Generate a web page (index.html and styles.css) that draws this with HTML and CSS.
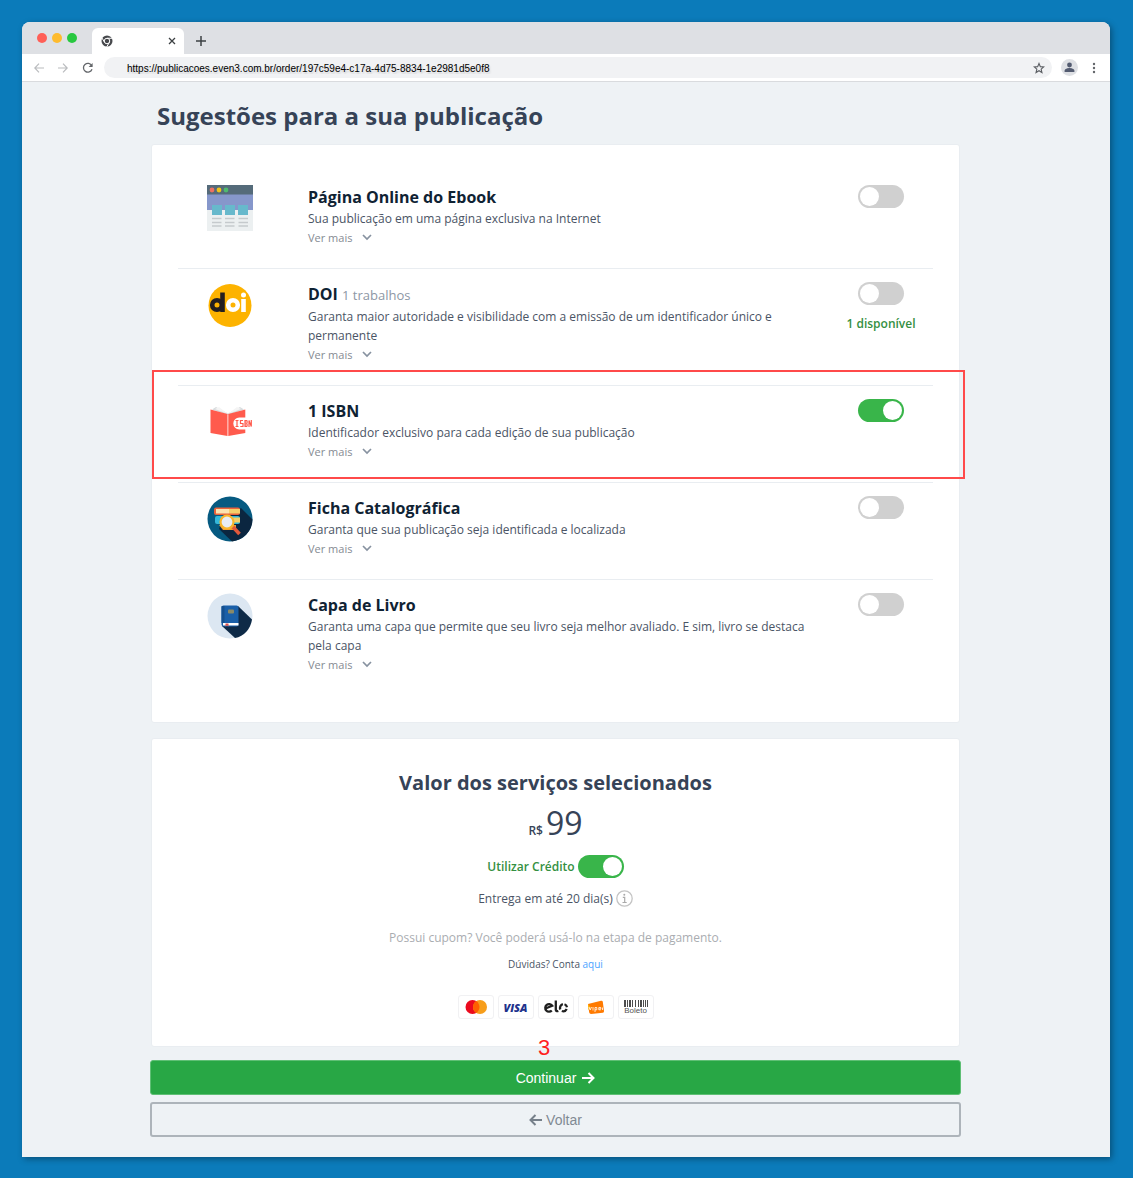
FILE: index.html
```
<!DOCTYPE html>
<html lang="pt-BR">
<head>
  <meta charset="UTF-8">
  <meta name="viewport" content="width=device-width, initial-scale=1.0">
  <title>Sugestões para a sua publicação</title>
  <link rel="stylesheet" href="styles.css">
</head>
<body>
  <div class="window">
    <header class="tabs">
      <span class="dot red"></span>
      <span class="dot yellow"></span>
      <span class="dot green"></span>
      <div class="tab">
        <svg width="12" height="12" viewBox="0 0 24 24"><circle cx="12" cy="12" r="11" fill="#47494d"/><circle cx="12" cy="12" r="5.500" fill="#47494d" stroke="#fff" stroke-width="2"/><path d="M12 6.500H23M7.200 14.800L2 6M16.800 14.800L11.500 23.500" stroke="#fff" stroke-width="2"/></svg>
        <button class="icon-btn" aria-label="Fechar aba"><svg width="8" height="8" viewBox="0 0 8 8"><path d="M1 1l6 6M7 1L1 7" stroke="#3c4043" stroke-width="1.300"/></svg></button>
      </div>
      <button class="icon-btn new-tab" aria-label="Nova aba"><svg width="10" height="10" viewBox="0 0 10 10"><path d="M5 0v10M0 5h10" stroke="#3c4043" stroke-width="1.500"/></svg></button>
    </header>

    <div class="toolbar">
      <button class="icon-btn" aria-label="Voltar página"><svg width="10" height="10" viewBox="0 0 10 10"><path d="M10 5H1M5 .7L.8 5 5 9.300" fill="none" stroke="#b9bbbe" stroke-width="1.200"/></svg></button>
      <button class="icon-btn" aria-label="Avançar página"><svg width="10" height="10" viewBox="0 0 10 10"><path d="M0 5h9M5 .7L9.200 5 5 9.300" fill="none" stroke="#b9bbbe" stroke-width="1.200"/></svg></button>
      <button class="icon-btn" aria-label="Recarregar"><svg width="12" height="12" viewBox="0 0 12 12"><path d="M9.800 3.800A4.400 4.400 0 1 0 10 7.300" fill="none" stroke="#63666a" stroke-width="1.300"/><path d="M10.600 1v4H6.600z" fill="#63666a"/></svg></button>
      <div class="address">
        <input type="text" aria-label="Endereço" value="https://publicacoes.even3.com.br/order/197c59e4-c17a-4d75-8834-1e2981d5e0f8">
        <svg width="12" height="12" viewBox="0 0 24 24"><path d="M12 3l2.700 6.300 6.800.6-5.200 4.500 1.600 6.700L12 17.500l-5.900 3.600 1.600-6.700-5.200-4.500 6.800-.6z" fill="none" stroke="#5b5e63" stroke-width="2.200"/></svg>
      </div>
      <svg class="avatar" width="17" height="17" viewBox="0 0 17 17"><circle cx="8.500" cy="8.500" r="8.500" fill="#dee0e4"/><circle cx="8.500" cy="6" r="2.400" fill="#535b70"/><path d="M3.600 13v-1.300c0-1.900 3.200-2.700 4.900-2.700s4.900.8 4.900 2.700V13z" fill="#535b70"/></svg>
      <button class="icon-btn" aria-label="Menu"><svg width="4" height="12" viewBox="0 0 4 12"><g fill="#63666a"><circle cx="2" cy="2" r="1.200"/><circle cx="2" cy="6" r="1.200"/><circle cx="2" cy="10" r="1.200"/></g></svg></button>
    </div>

    <main class="content">
      <h1>Sugestões para a sua publicação</h1>

      <section class="card services">
        <div class="service">
          <svg class="service-icon" width="46" height="46" viewBox="0 0 46 46"><path fill="#ecf0f1" d="M0 0h46v46H0z"/><path fill="#8697cb" d="M0 9h46v16H0z"/><path fill="#556b7a" d="M0 0h46v9.500H0z"/><circle cx="5" cy="5" r="2.400" fill="#ed7161"/><circle cx="12" cy="5" r="2.400" fill="#efc41a"/><circle cx="19" cy="5" r="2.400" fill="#4fba6f"/><path fill="#67b9cc" d="M5 20h10v10H5zM18 20h10v10H18zM31 20h10v10H31z"/><path stroke="#c5cacd" stroke-width="1.300" d="M5 33.500h9.500M5 37.500h9.500M5 41h9.500M18 33.500h9.500M18 37.500h9.500M18 41h9.500M31.500 33.500H41M31.500 37.500H41M31.500 41H41"/></svg>
          <div class="service-text">
            <h2><label for="pagina">Página Online do Ebook</label></h2>
            <p>Sua publicação em uma página exclusiva na Internet</p>
            <button class="more">Ver mais <svg width="10" height="7" viewBox="0 0 10 7"><path d="M1 1l4 4 4-4" fill="none" stroke="#8792a0" stroke-width="1.700"/></svg></button>
          </div>
          <div class="service-toggle"><input type="checkbox" class="toggle" id="pagina"></div>
        </div>

        <div class="service">
          <svg class="service-icon" width="46" height="46" viewBox="0 0 46 46"><circle cx="23" cy="23.500" r="21.500" fill="#fdb300"/><g fill="none" stroke-width="4.600"><circle cx="10" cy="23" r="4.800" stroke="#231f20"/><path d="M15.500 10.500V30" stroke="#231f20"/><circle cx="26" cy="23" r="4.800" stroke="#fff"/><path d="M36.500 17v13" stroke="#fff"/></g><circle cx="36.500" cy="13" r="2.500" fill="#fff"/></svg>
          <div class="service-text">
            <h2><label for="doi">DOI</label> <small>1 trabalhos</small></h2>
            <p>Garanta maior autoridade e visibilidade com a emissão de um identificador único e permanente</p>
            <button class="more">Ver mais <svg width="10" height="7" viewBox="0 0 10 7"><path d="M1 1l4 4 4-4" fill="none" stroke="#8792a0" stroke-width="1.700"/></svg></button>
          </div>
          <div class="service-toggle"><input type="checkbox" class="toggle" id="doi"><span class="available">1 disponível</span></div>
        </div>

        <div class="service highlighted">
          <svg class="service-icon" width="46" height="46" viewBox="0 0 46 46"><path fill="#d9dcde" d="M5 10.500L9 8l12 6.500V16zM37 10.500L33 8l-12 6.500V16z"/><path fill="#f4f4f4" d="M8 10l4-2 9 7zM34 10l-4-2-9 7z"/><path fill="#ff5b4d" d="M3.500 10.500l17 4.500v22l-17-3zM21.300 15l17-4.500v8h-6a6 6 0 0 0 0 12h6V34l-17 3z"/><g fill="none" stroke="#ff5b4d" stroke-width="1.200"><path d="M28.500 21.500h3M30 21.500v6M28.500 27.500h3M36 21.500h-2.500v3H36v3h-2.700M38 21.500h1.800l.4 1.500-.5 1.500.5 1.500-.4 1.500H38zM38.200 21v7M42 28v-6.500l2.300 6v-6.500"/></g></svg>
          <div class="service-text">
            <h2><label for="isbn">1 ISBN</label></h2>
            <p>Identificador exclusivo para cada edição de sua publicação</p>
            <button class="more">Ver mais <svg width="10" height="7" viewBox="0 0 10 7"><path d="M1 1l4 4 4-4" fill="none" stroke="#8792a0" stroke-width="1.700"/></svg></button>
          </div>
          <div class="service-toggle"><input type="checkbox" class="toggle" id="isbn" checked></div>
        </div>

        <div class="service">
          <svg class="service-icon" width="46" height="46" viewBox="0 0 46 46"><circle cx="23" cy="23" r="22.500" fill="#065a81"/><path fill="#0b2640" d="M34 12l11.500 11.500A22.500 22.500 0 0 1 25 45.400L12 33l3-9z"/><rect x="7" y="11.500" width="26" height="7.500" rx="2" fill="#e9623b"/><path fill="#fbe3b0" d="M9 13h13v4.500H9z"/><path fill="#f6cf6a" d="M22 13h11v4.500H22z"/><rect x="8" y="20" width="25" height="8" rx="2" fill="#35b8da"/><path fill="#f6cf6a" d="M21 21.500h12v5H21z"/><path fill="#f29c2e" d="M12 29h17v5H16z"/><path d="M26 31l6.500 7" stroke="#e2583b" stroke-width="3.600"/><circle cx="20" cy="26" r="6.500" fill="#e8edf5" stroke="#f8b62d" stroke-width="2.200"/></svg>
          <div class="service-text">
            <h2><label for="ficha">Ficha Catalográfica</label></h2>
            <p>Garanta que sua publicação seja identificada e localizada</p>
            <button class="more">Ver mais <svg width="10" height="7" viewBox="0 0 10 7"><path d="M1 1l4 4 4-4" fill="none" stroke="#8792a0" stroke-width="1.700"/></svg></button>
          </div>
          <div class="service-toggle"><input type="checkbox" class="toggle" id="ficha"></div>
        </div>

        <div class="service">
          <svg class="service-icon" width="46" height="46" viewBox="0 0 46 46"><circle cx="23" cy="23" r="22.500" fill="#dce7f2"/><path fill="#0e2a47" d="M31 13l14 13.500C43.500 36 37 43.500 28 45L15 33z"/><rect x="14.500" y="12.500" width="17" height="21" rx="2" fill="#1a5fa8"/><path fill="#15508f" d="M14.500 13h3v17h-3z"/><path fill="#fff" d="M16 30h15.500v2.500H16z"/><path fill="#d9534f" d="M18.500 30.500h3v3l-1.500-1-1.500 1z"/><rect x="21" y="16.500" width="6" height="4" rx="1" fill="#8a8a68"/></svg>
          <div class="service-text">
            <h2><label for="capa">Capa de Livro</label></h2>
            <p>Garanta uma capa que permite que seu livro seja melhor avaliado. E sim, livro se destaca pela capa</p>
            <button class="more">Ver mais <svg width="10" height="7" viewBox="0 0 10 7"><path d="M1 1l4 4 4-4" fill="none" stroke="#8792a0" stroke-width="1.700"/></svg></button>
          </div>
          <div class="service-toggle"><input type="checkbox" class="toggle" id="capa"></div>
        </div>
      </section>

      <section class="card total">
        <h2>Valor dos serviços selecionados</h2>
        <div class="price"><small>R$</small><span>99</span></div>
        <div class="credit"><label for="credito">Utilizar Crédito</label><input type="checkbox" class="toggle" id="credito" checked></div>
        <div class="delivery">Entrega em até 20 dia(s) <svg width="17" height="17" viewBox="0 0 17 17"><circle cx="8.500" cy="8.500" r="7.700" fill="none" stroke="#c4c4c4" stroke-width="1.300"/><circle cx="8.300" cy="4.800" r="1" fill="#aaa"/><path d="M6.800 7.300h1.900v5M6.500 12.500h4.200" fill="none" stroke="#aaa" stroke-width="1.200"/></svg></div>
        <p class="coupon">Possui cupom? Você poderá usá-lo na etapa de pagamento.</p>
        <p class="help">Dúvidas? Conta <a href="#">aqui</a></p>
        <div class="payments">
          <span class="payment"><svg width="22" height="14" viewBox="0 0 22 14"><circle cx="7.500" cy="7" r="7" fill="#eb0a1e"/><circle cx="15" cy="7" r="7" fill="#f79e1b"/><path fill="#ff5f00" d="M11.250 1.100a7 7 0 0 1 0 11.800 7 7 0 0 1 0-11.800z"/></svg></span>
          <span class="payment visa">VISA</span>
          <span class="payment"><svg width="26" height="14" viewBox="0 0 26 14"><g fill="none" stroke="#1f1f1f" stroke-width="2.300"><path d="M1.800 8.700l7.400-3A3.800 3.800 0 1 0 8.800 10.500"/><path d="M12.800.5v9.200c0 1.200 1 1.800 2.500 1.200"/><path d="M17.300 9.500a4 4 0 0 1 2.600-5.400M21.500 4.200a4 4 0 0 1 2.500 3M23.700 9a4 4 0 0 1-4.900 2"/></g></svg></span>
          <span class="payment"><svg width="18" height="15" viewBox="0 0 18 15"><path fill="#ff7a00" d="M1 4L14 .8q1.500-.3 1.800 1L17 11q.2 1.500-1.200 1.800L4 14q-1.500 0-1.800-1.400z"/><path fill="#ffb400" d="M1 4l3 4-2.500 2z"/><path d="M2 7l1.200 3L4.500 7M6 7v3.500M8 12V7.500h1.800v2.300H8M11.800 9h2V7.500h-2v2.300h2M15.500 7.500v2.500" fill="none" stroke="#fff" stroke-width=".8"/></svg></span>
          <span class="payment boleto"><svg width="24" height="7" viewBox="0 0 24 7"><path fill="#4d4d4d" d="M0 0h2v7H0zM3 0h1v7H3zM5 0h2v7H5zM8 0h1v7H8zM11 0h1v7h-1zM14 0h1v7h-1zM16 0h2v7h-2zM19 0h1v7h-1zM21 0h1v7h-1zM23 0h1v7h-1z"/></svg>Boleto</span>
        </div>
        <span class="step">3</span>
      </section>

      <div class="actions">
        <button class="btn btn-success">Continuar <svg width="13" height="12" viewBox="0 0 13 12"><path d="M0 6h11M6.500 1l5 5-5 5" fill="none" stroke="#fff" stroke-width="2"/></svg></button>
        <button class="btn btn-outline"><svg width="13" height="12" viewBox="0 0 13 12"><path d="M13 6H2M6.500 1l-5 5 5 5" fill="none" stroke="#76808a" stroke-width="2"/></svg> Voltar</button>
      </div>
    </main>
  </div>
</body>
</html>
```

FILE: styles.css
```
* {
  box-sizing: border-box;
}
body {
  margin: 0;
  padding: 22px 23px 22px 22px;
  background: #0b7bba;
  color: #4a5465;
  font-family: "Open Sans", "Noto Sans", sans-serif;
  font-size: 12px;
  line-height: 19px;
}
h1, h2, p {
  margin: 0;
}
button {
  padding: 0;
  border: 0;
  background: none;
  font: inherit;
  color: inherit;
  cursor: pointer;
}
svg {
  flex: none;
}

/* browser window */
.window {
  background: #eef2f5;
  border-radius: 8px 8px 0 0;
  box-shadow: 2px 2px 6px rgba(0, 0, 0, .35);
}
.tabs {
  display: flex;
  align-items: center;
  gap: 5px;
  height: 32px;
  padding-left: 15px;
  background: #dee0e4;
  border-radius: 8px 8px 0 0;
}
.dot {
  width: 10px;
  height: 10px;
  border-radius: 50%;
}
.red {
  background: #ff5f57;
}
.yellow {
  background: #febb2e;
}
.green {
  background: #28c840;
}
.tab {
  display: flex;
  align-items: center;
  justify-content: space-between;
  align-self: flex-end;
  width: 92px;
  height: 26px;
  margin-left: 10px;
  padding: 0 8px 0 9px;
  background: #fff;
  border-radius: 6px 6px 0 0;
}
.icon-btn {
  display: flex;
}
.new-tab {
  margin: 6px 0 0 7px;
}
.toolbar {
  display: flex;
  align-items: center;
  gap: 14px;
  height: 28px;
  padding: 0 14px 0 12px;
  background: #fff;
  border-bottom: 1px solid #d9dbde;
}
.address {
  display: flex;
  flex: 1;
  align-items: center;
  height: 21px;
  margin: 0 -5px 0 -4px;
  padding: 0 7px 0 23px;
  background: #f1f2f4;
  border-radius: 11px;
}
.address input {
  flex: 1;
  min-width: 0;
  padding: 2px 0 0;
  border: 0;
  outline: 0;
  background: none;
  color: #000;
  font: 10px "Liberation Sans", Arial, sans-serif;
  text-shadow: 1px 2px 2px rgba(0, 0, 0, .15);
}

/* page */
.content {
  padding: 17px 149px 20px 128px;
}
h1 {
  margin: 0 7px 11px;
  color: #364357;
  font-size: 24px;
  line-height: 34px;
}
.card {
  position: relative;
  margin: 0 1px;
  background: #fff;
  border: 1px solid #e9edf1;
  border-radius: 3px;
}
.services {
  margin-bottom: 15px;
  padding: 27px 26px;
}
.service {
  position: relative;
  display: grid;
  grid-template-columns: 130px 1fr 104px;
  padding: 13px 0 21px;
}
.service + .service {
  border-top: 1px solid #e9edf1;
}
.service-icon {
  margin-left: 29px;
}
.service-text {
  padding-right: 15px;
}
.service h2 {
  color: #0f2233;
  font-size: 16px;
  line-height: 24px;
}
.service small {
  color: #8d97a5;
  font-size: 13px;
  font-weight: 400;
}
.more {
  display: flex;
  align-items: center;
  gap: 10px;
  color: #858b93;
  font-size: 11px;
}
.service-toggle {
  display: flex;
  flex-direction: column;
  align-items: center;
  gap: 9px;
}
.available {
  color: #349042;
  font-weight: 600;
}
.toggle {
  appearance: none;
  width: 46px;
  height: 23px;
  margin: 0;
  padding: 2px;
  background: #d0d0d0;
  border-radius: 12px;
  cursor: pointer;
}
.toggle::before {
  content: "";
  display: block;
  width: 19px;
  height: 19px;
  background: #fff;
  border-radius: 50%;
}
.toggle:checked {
  background: #39b54a;
}
.toggle:checked::before {
  margin-left: auto;
}
.highlighted::after {
  content: "";
  position: absolute;
  inset: -16px -32px 3px -26px;
  border: 2px solid #ff4a4a;
  pointer-events: none;
}

/* total */
.total {
  display: flex;
  flex-direction: column;
  align-items: center;
  padding: 26px 20px 27px;
}
.total h2 {
  color: #364357;
  font-size: 20px;
  line-height: 36px;
}
.price {
  display: flex;
  align-items: baseline;
  gap: 3px;
  color: #364357;
  font-size: 32px;
  line-height: 44px;
}
.price small {
  font-size: 12px;
  font-weight: 600;
}
.credit {
  display: flex;
  align-items: center;
  gap: 3px;
  margin-top: 2px;
  color: #349042;
  font-weight: 600;
}
.delivery {
  display: flex;
  align-items: center;
  gap: 3px;
  margin-top: 11px;
}
.coupon {
  margin-top: 20px;
  color: #aaadb1;
}
.help {
  margin-top: 8px;
  font-size: 10px;
}
.help a {
  color: #4da3ff;
  text-decoration: none;
}
.payments {
  display: flex;
  gap: 4px;
  margin-top: 21px;
}
.payment {
  display: flex;
  align-items: center;
  justify-content: center;
  width: 36px;
  height: 24px;
  border: 1px solid #f1f1f3;
  border-radius: 3px;
}
.visa {
  color: #21318c;
  font-size: 11px;
  font-style: italic;
  font-weight: 800;
}
.boleto {
  flex-direction: column;
  color: #555;
  font: 8px/8px "Liberation Sans", Arial, sans-serif;
}
.step {
  position: absolute;
  left: 386px;
  bottom: -14px;
  color: #ff1f1f;
  font: 22px/24px "Liberation Sans", Arial, sans-serif;
}

.actions {
  display: grid;
  gap: 7px;
  margin-top: 13px;
}
.btn {
  display: flex;
  align-items: center;
  justify-content: center;
  gap: 6px;
  height: 35px;
  border-radius: 3px;
  font: 14px "Liberation Sans", Arial, sans-serif;
}
.btn-success {
  background: #28a745;
  border: 1px solid #5fbf75;
  color: #fff;
}
.btn-outline {
  gap: 4px;
  border: 2px solid #adb4ba;
  color: #818a93;
}
```
